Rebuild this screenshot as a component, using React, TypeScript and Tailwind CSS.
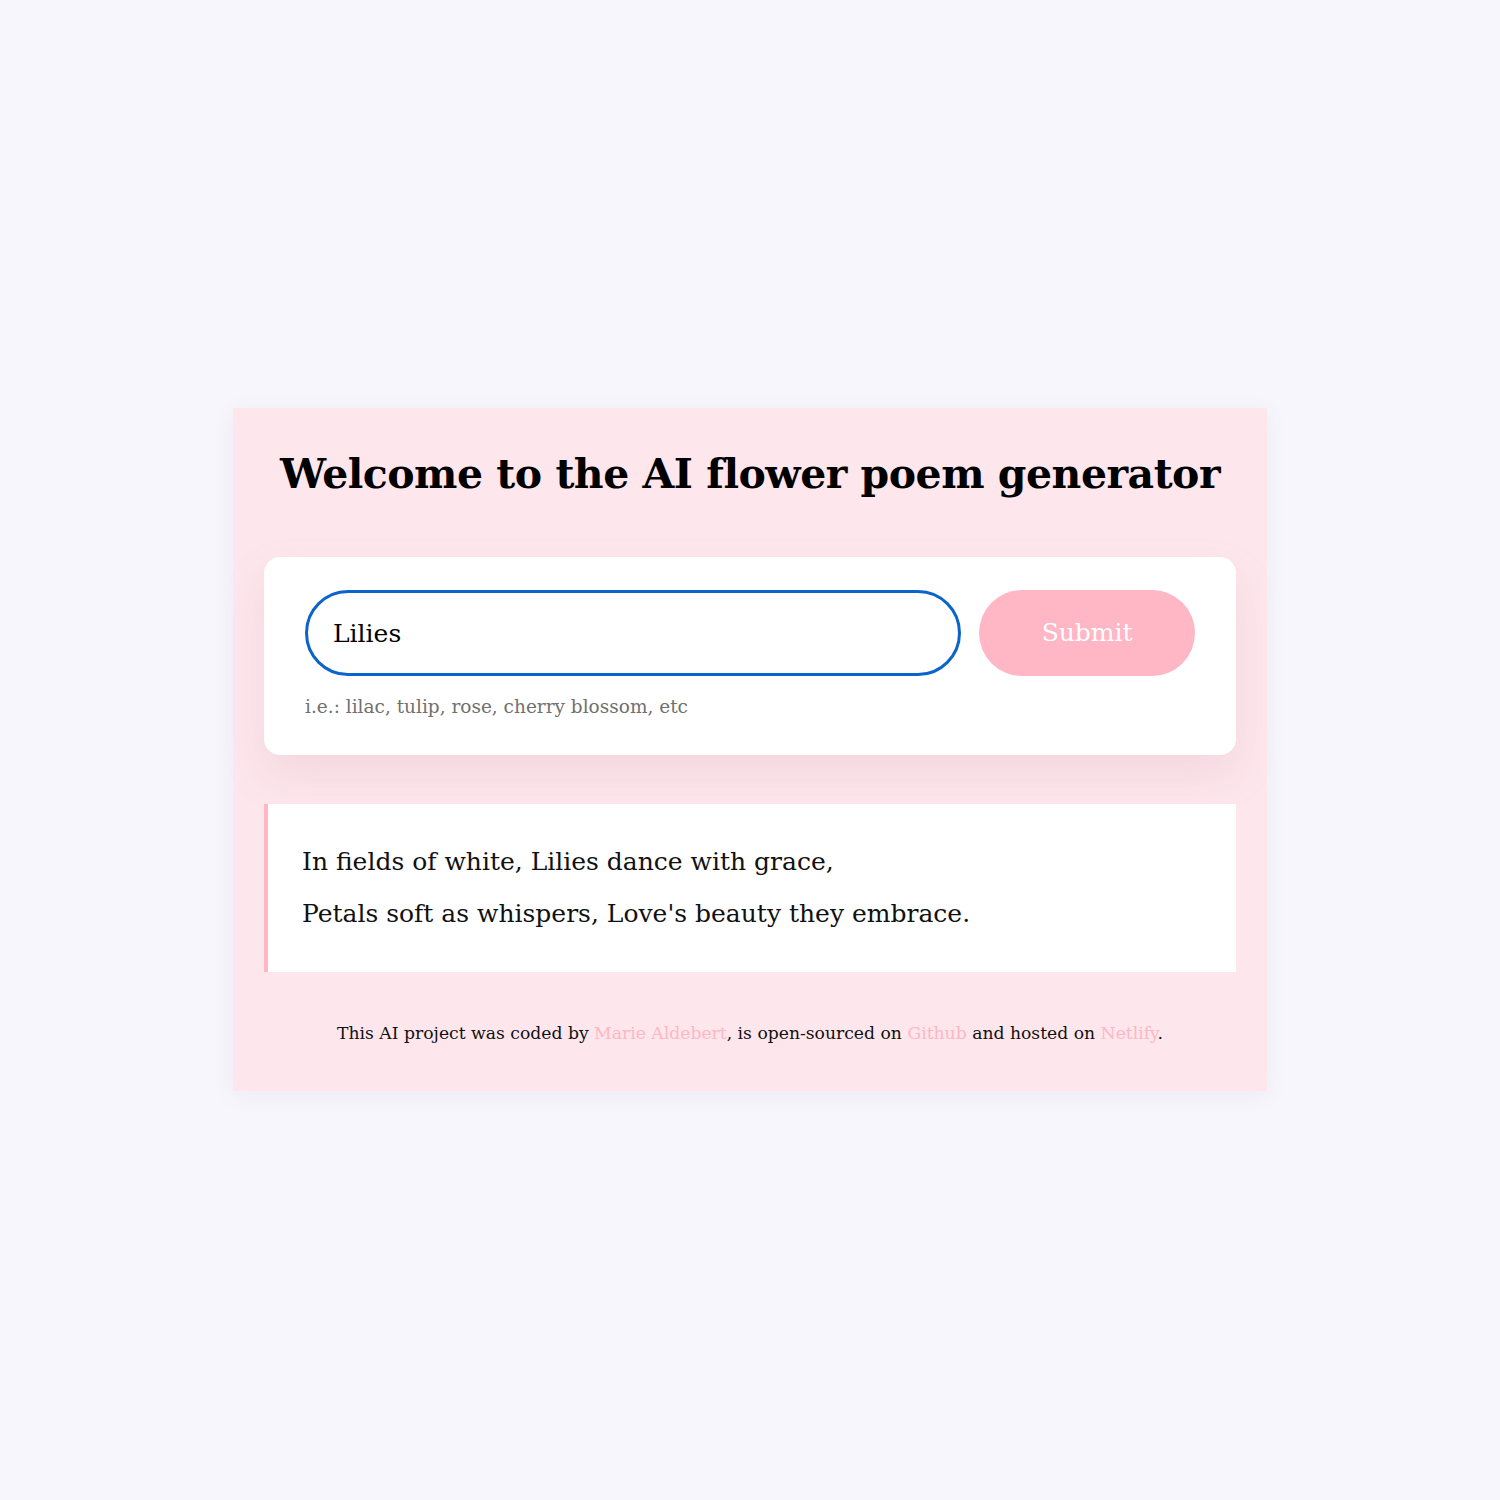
import React, { useState } from 'react';

const serif = { fontFamily: '"DejaVu Serif", "Liberation Serif", serif' };

export default function App() {
  const [flower, setFlower] = useState('Lilies');

  return (
    <div className="min-h-[1500px] w-full bg-[#f7f6fc] pt-[408px]" style={serif}>
      <div className="mx-auto w-[1034px] bg-[#fde6ec] px-[31px] pt-[38px] pb-[46px] shadow-[0_4px_20px_rgba(120,100,140,0.08)]">
        <h1 className="text-center text-[41px] font-bold leading-[56px] tracking-[-0.5px] text-black">
          Welcome to the AI flower poem generator
        </h1>

        <form
          className="mt-[55px] rounded-[16px] bg-white px-[41px] pt-[33px] pb-[36px] shadow-[0_20px_40px_rgba(200,150,170,0.18)]"
          onSubmit={e => e.preventDefault()}
        >
          <div className="flex items-center gap-[18px]">
            <input
              value={flower}
              onChange={e => setFlower(e.target.value)}
              className="h-[86px] w-[657px] rounded-full border-[3px] border-[#0a64c9] px-[25px] text-[25px] text-black outline-none"
              style={serif}
            />
            <button
              type="submit"
              className="h-[86px] w-[216px] rounded-full bg-[#ffb6c5] text-[25px] text-white"
              style={serif}
            >
              Submit
            </button>
          </div>
          <p className="mt-[19px] text-[18.5px] leading-[24px] text-[#707070]">
            i.e.: lilac, tulip, rose, cherry blossom, etc
          </p>
        </form>

        <div className="mt-[49px] border-l-4 border-[#ffb6c5] bg-white py-[32px] pl-[34px] text-[25px] leading-[52px] text-[#111]">
          <div>In fields of white, Lilies dance with grace,</div>
          <div>Petals soft as whispers, Love's beauty they embrace.</div>
        </div>

        <footer className="mt-[49px] text-center text-[17.2px] leading-[24px] text-[#111]">
          This AI project was coded by{' '}
          <a href="#" className="text-[#ffb6c5]">Marie Aldebert</a>, is open-sourced on{' '}
          <a href="#" className="text-[#ffb6c5]">Github</a> and hosted on{' '}
          <a href="#" className="text-[#ffb6c5]">Netlify</a>.
        </footer>
      </div>
    </div>
  );
}
